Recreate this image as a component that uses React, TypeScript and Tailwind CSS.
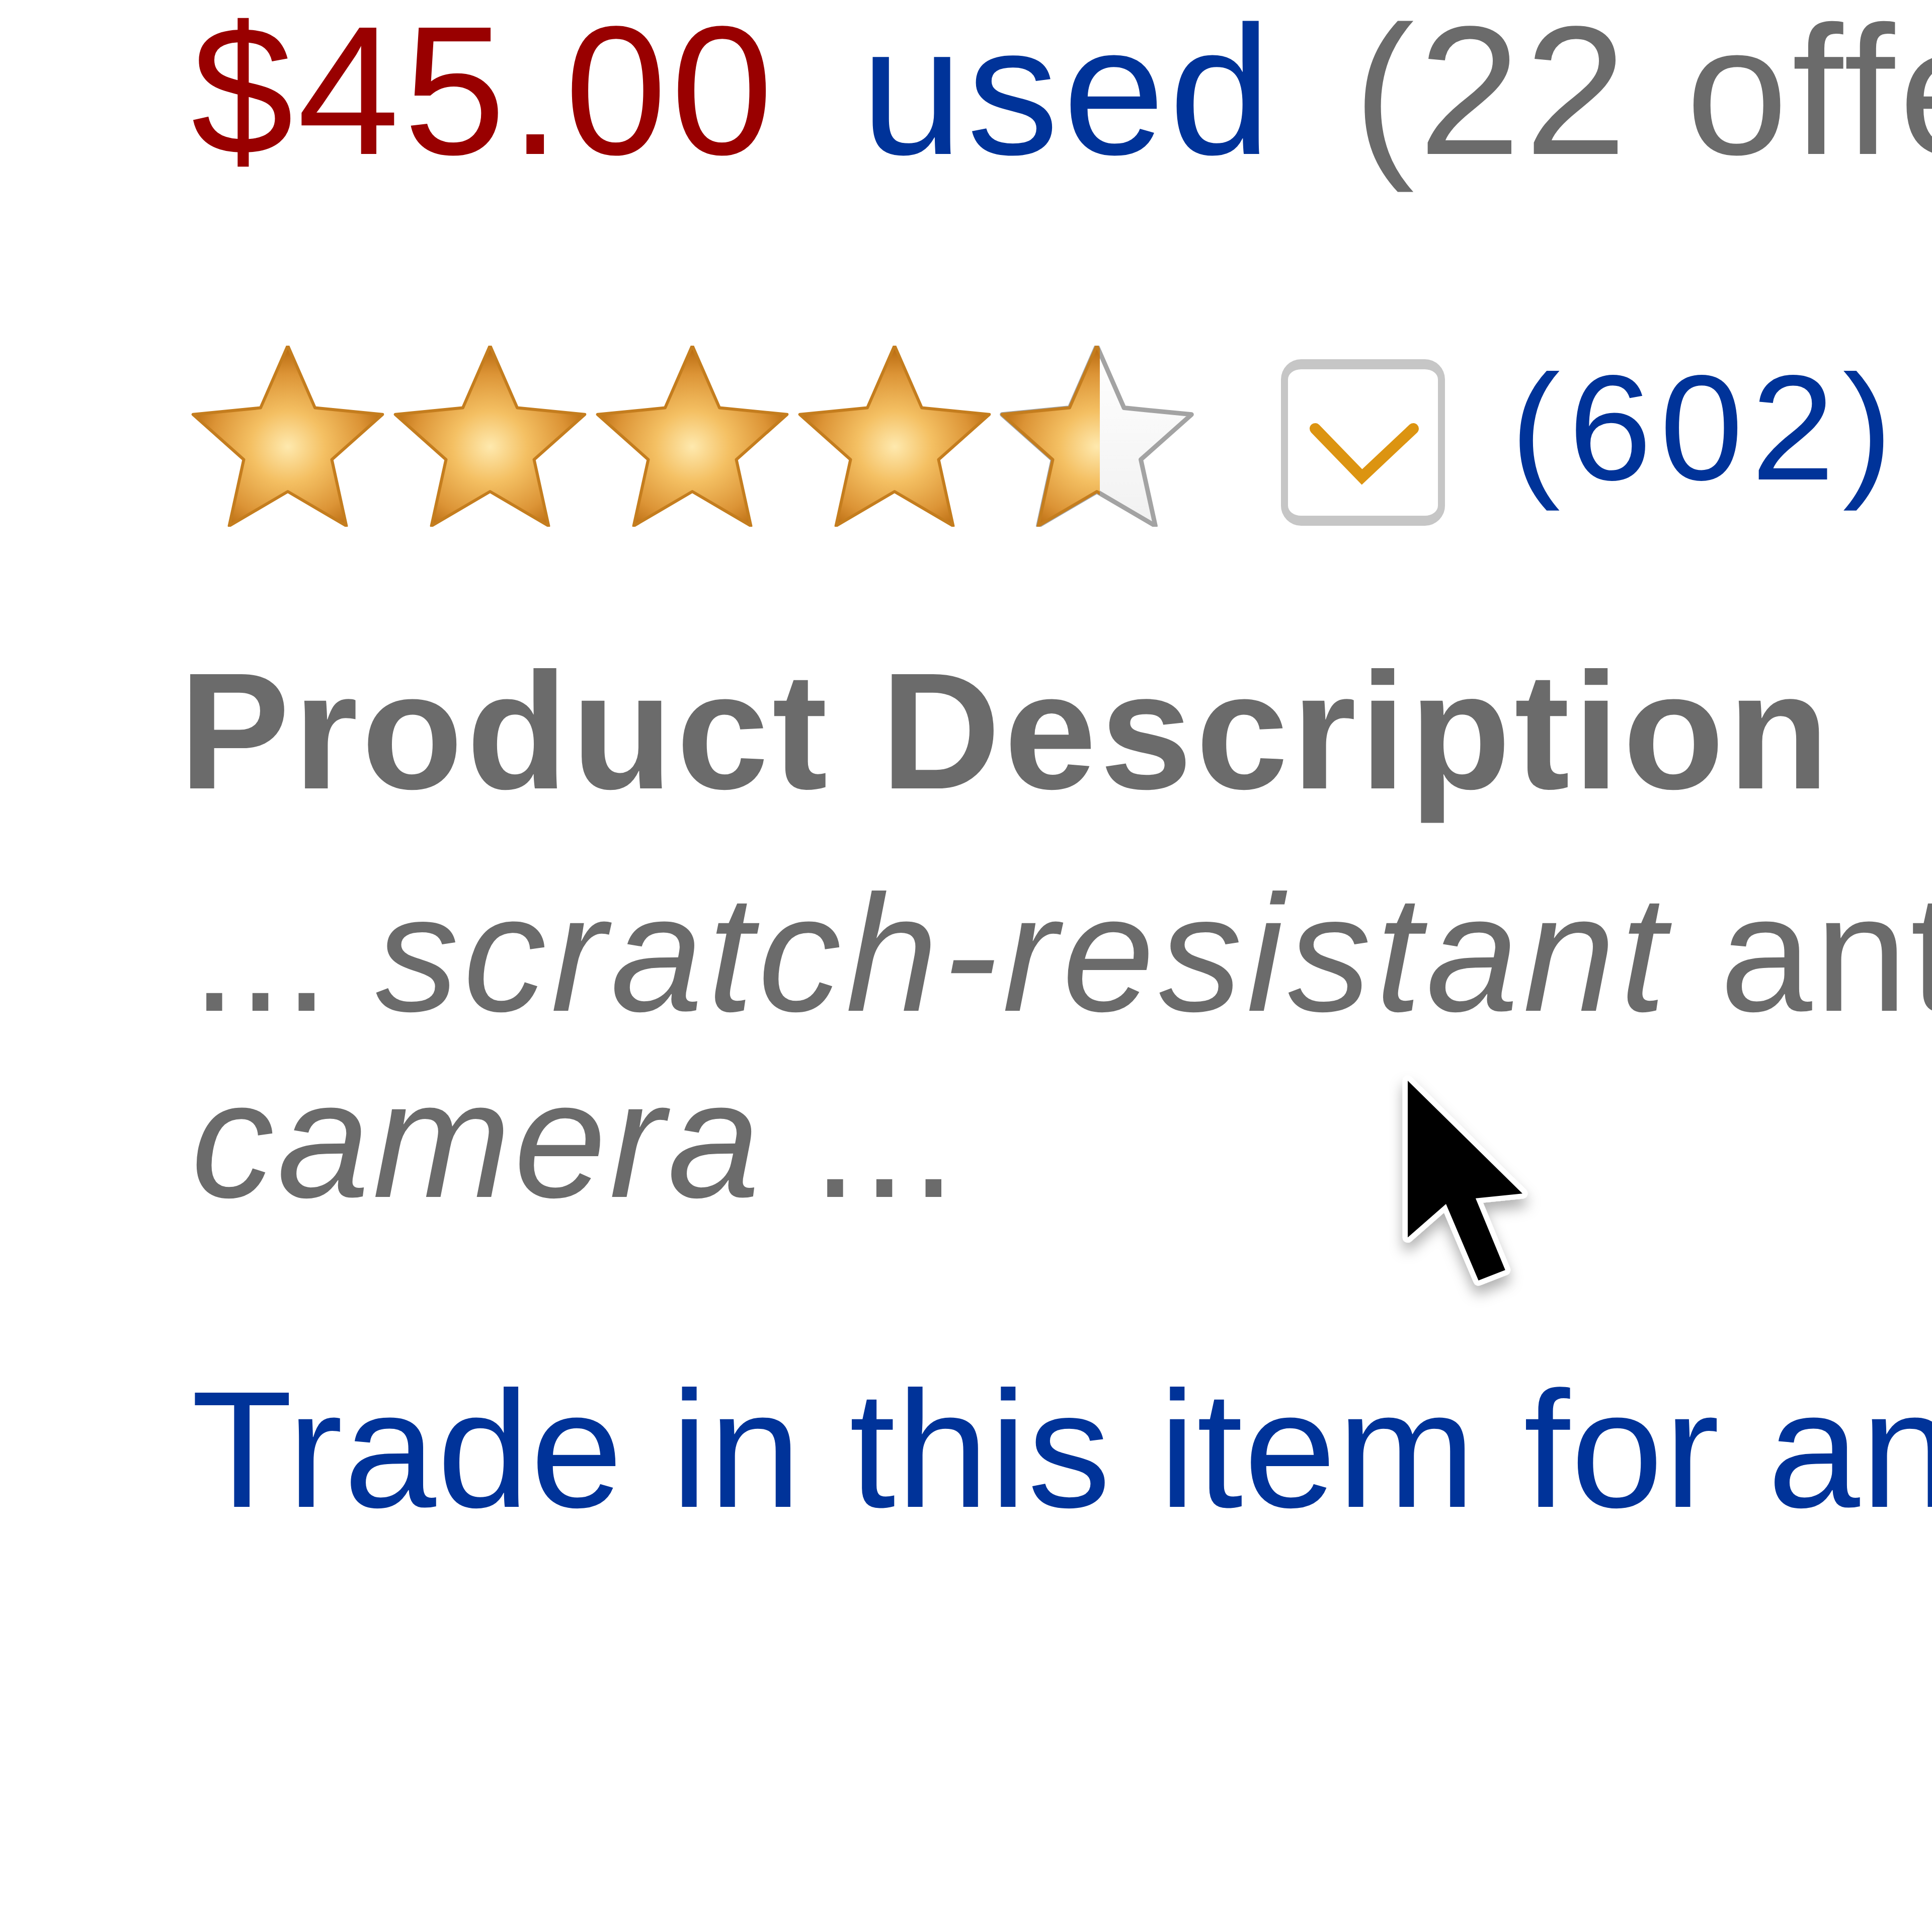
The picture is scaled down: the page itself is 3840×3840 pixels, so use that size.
import React from 'react';

const CELL = 402;
const R = 198;
const r = 92;

function starPoints(cx: number, cy: number) {
  const pts: string[] = [];
  for (let i = 0; i < 10; i++) {
    const a = ((-90 + 36 * i) * Math.PI) / 180;
    const rad = i % 2 === 0 ? R : r;
    pts.push(`${(cx + rad * Math.cos(a)).toFixed(1)},${(cy + rad * Math.sin(a)).toFixed(1)}`);
  }
  return pts.join(' ');
}

function Stars({ rating }: { rating: number }) {
  return (
    <svg width={CELL * 5} height={360} viewBox={`0 0 ${CELL * 5} 360`} className="shrink-0">
      <defs>
        <radialGradient id="gold" cx="0.5" cy="0.56" r="0.56">
          <stop offset="0" stopColor="#fee9ae" />
          <stop offset="0.35" stopColor="#f4c063" />
          <stop offset="0.72" stopColor="#dc9436" />
          <stop offset="1" stopColor="#b5660b" />
        </radialGradient>
        <linearGradient id="empty" x1="0" y1="0" x2="0" y2="1">
          <stop offset="0" stopColor="#ffffff" />
          <stop offset="1" stopColor="#f1f1f1" />
        </linearGradient>
        {[0, 1, 2, 3, 4].map((i) => {
          const fill = Math.max(0, Math.min(1, rating - i));
          return (
            <clipPath id={`clip-${i}`} key={i}>
              <rect x={i * CELL} y={0} width={(CELL - 2 * R) / 2 + 2 * R * fill * 1.03} height={360} />
            </clipPath>
          );
        })}
      </defs>
      {[0, 1, 2, 3, 4].map((i) => {
        const cx = i * CELL + CELL / 2;
        const pts = starPoints(cx, 198);
        return (
          <g key={i}>
            {rating - i < 1 && (
              <polygon points={pts} fill="url(#empty)" stroke="#a3a3a3" strokeWidth={9} strokeLinejoin="round" />
            )}
            <polygon
              points={pts}
              fill="url(#gold)"
              stroke="#c47d1e"
              strokeWidth={6}
              strokeLinejoin="round"
              clipPath={`url(#clip-${i})`}
            />
          </g>
        );
      })}
    </svg>
  );
}

function Cursor() {
  return (
    <svg
      width={323}
      height={494}
      viewBox="-2 -2 17 26"
      className="absolute left-[2760px] top-[2110px]"
    >
      <defs>
        <filter id="cshadow" x="-50%" y="-50%" width="200%" height="200%">
          <feDropShadow dx="0" dy="0.9" stdDeviation="0.7" floodColor="#000" floodOpacity="0.3" />
        </filter>
      </defs>
      <path
        d="M0 0 L0 16.4 L4 12.9 L7.4 20.9 L10.2 19.8 L7.1 12.3 L12 11.8 Z"
        fill="#000"
        stroke="#fff"
        strokeWidth={1.1}
        strokeLinejoin="round"
        paintOrder="stroke"
        filter="url(#cshadow)"
      />
    </svg>
  );
}

export default function App() {
  return (
    <div className="relative w-[3840px] h-[3840px] overflow-hidden bg-white font-['Liberation_Sans',Arial,sans-serif]">
      <div className="flex flex-col pl-[380px] whitespace-nowrap">
        {/* price line */}
        <div className="mt-[10px] h-[340px] text-[365px] leading-[340px] tracking-[8px]">
          <span className="text-[#990000]">$45.00</span>{' '}
          <span className="ml-[57px] text-[#003399]">used</span>{' '}
          <span className="ml-[46px] text-[#6b6b6b]">(22 offers)</span>
        </div>

        {/* rating row */}
        <div className="mt-[337px] -ml-[9px] flex h-[360px] items-start">
          <Stars rating={4.5} />
          <div className="ml-[165px] mt-[27px] h-[331px] w-[326px] shrink-0 rounded-[40px] border-x-[14px] border-y-[20px] border-[#c6c6c6] bg-white">
            <svg className="h-full w-full" viewBox="0 0 298 291">
              <polyline
                points="54,118 147,214 249,118"
                fill="none"
                stroke="#dc9411"
                strokeWidth={22}
                strokeLinecap="round"
                strokeLinejoin="miter"
              />
            </svg>
          </div>
          <span className="ml-[130px] text-[298px] leading-[326px] tracking-[16px] text-[#003399]">(602)</span>
        </div>

        {/* description */}
        <div className="mt-[221px] -ml-[24px] text-[330px] leading-[370px] font-bold tracking-[7px] text-[#6b6b6b]">
          Product Description
        </div>
        <div className="mt-[72px] text-[330px] leading-[370px] text-[#6b6b6b]">
          <span>... </span>
          <span className="italic tracking-[9px]">scratch-resistant</span>
          <span className="tracking-[6px]"> anti-reflective coating ...</span>
        </div>
        <div className="text-[330px] leading-[370px] text-[#6b6b6b]">
          <span className="italic tracking-[6px]">camera</span>
          <span className="tracking-[6px]"> ...</span>
        </div>

        {/* trade-in link */}
        <div className="mt-[246px] text-[330px] leading-[370px] tracking-[2px] text-[#003399]">
          Trade in this item for an Amazon.com Gift Card
        </div>
      </div>

      <Cursor />
    </div>
  );
}
